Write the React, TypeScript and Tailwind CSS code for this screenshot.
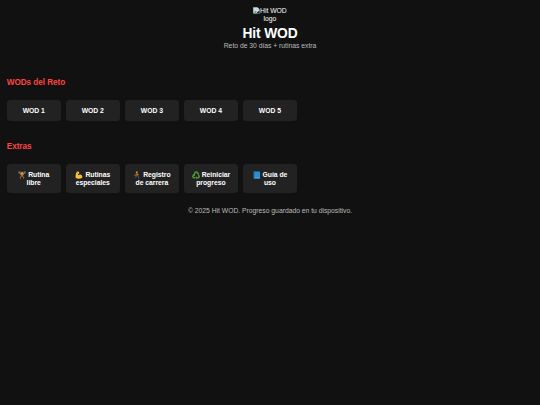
import type { ReactNode } from 'react';

function BrokenImage() {
  return (
    <svg viewBox="0 0 16 16" className="inline-block h-[6.75px] w-[6.75px] align-[-1px]">
      <path d="M1 1h9l5 5v9H1z" fill="#c9dcf2" stroke="#e5e7eb" />
      <path d="M10 1v5h5" fill="#fff" stroke="#a3a3a3" />
      <path d="M2 14l4-6 3 3-4 3z" fill="#4caf50" />
      <path d="M8 15l7-7v7z" fill="#111" />
    </svg>
  );
}

function Emoji({ children }: { children: ReactNode }) {
  return (
    <svg viewBox="0 0 32 32" className="mr-[2px] inline-block h-[8px] w-[8px] align-[-1.6px]">
      {children}
    </svg>
  );
}

const Lifter = () => (
  <Emoji>
    <path d="M3 5h26" stroke="#a7a7a7" strokeWidth="2" />
    <path d="M4 1v9M28 1v9" stroke="#80776a" strokeWidth="4" />
    <circle cx="16" cy="9" r="4" fill="#f5b83d" />
    <path d="M7 6l3 8h12l3-8" fill="none" stroke="#c9922f" strokeWidth="4" />
    <path d="M11 13h10l-1 9h-8z" fill="#b0702f" />
    <path d="M13 21l-4 4 1 5M19 21l4 4-1 5" fill="none" stroke="#b98530" strokeWidth="4" />
  </Emoji>
);

const Biceps = () => (
  <Emoji>
    <path
      d="M8 2l8 1 1 7-5 3 1 5c4-5 10-5 14-1 4 5 3 11-2 12-7 3-16 2-22-1C1 20 3 9 8 2z"
      fill="#fbc52e"
    />
    <path d="M9 9l6 1M13 18l-3 3M19 22c3-2 5-1 7 1" fill="none" stroke="#d68b16" strokeWidth="2" />
  </Emoji>
);

const Runner = () => (
  <Emoji>
    <circle cx="15" cy="5" r="4" fill="#d0922a" />
    <path d="M15 10l2 9" stroke="#c97a27" strokeWidth="6" />
    <path d="M14 12l-6 4-1 4M18 12l6 4" fill="none" stroke="#c08a2c" strokeWidth="3" />
    <path d="M16 19l-5 5-4 3M18 19l4 4v6" fill="none" stroke="#4d5b66" strokeWidth="4" />
  </Emoji>
);

const Recycle = () => (
  <Emoji>
    <g fill="none" stroke="#4d9130" strokeWidth="6">
      <path d="M9 12l5-8h5l4 6" />
      <path d="M25 14l4 8-3 5h-8" />
      <path d="M13 27H6l-3-5 4-7" />
    </g>
    <path d="M18 11l9-5v8zM19 21v11l-6-5zM2 14l9-2 1 9z" fill="#5fa53a" />
  </Emoji>
);

const Book = () => (
  <Emoji>
    <path d="M3 2h25v28H3z" fill="#2a8fd4" />
    <path d="M3 2h4v28H3z" fill="#1f78bd" />
    <path d="M6 27h22v2H6z" fill="#9ccaea" />
  </Emoji>
);

const wods = ['WOD 1', 'WOD 2', 'WOD 3', 'WOD 4', 'WOD 5'];

const extras = [
  { icon: <Lifter />, first: 'Rutina', second: 'libre' },
  { icon: <Biceps />, first: 'Rutinas', second: 'especiales' },
  { icon: <Runner />, first: 'Registro', second: 'de carrera' },
  { icon: <Recycle />, first: 'Reiniciar', second: 'progreso' },
  { icon: <Book />, first: 'Guía de', second: 'uso' },
];

function Card({ children }: { children: ReactNode }) {
  return (
    <button className="w-[54px] rounded-[3.4px] bg-[#222] py-[6.75px] text-center text-[6.8px] leading-[7.7px] font-bold tracking-[-0.02px] whitespace-nowrap text-white">
      {children}
    </button>
  );
}

export default function App() {
  return (
    <div className="h-[405px] overflow-hidden bg-[#111] font-['Liberation_Sans',Arial,sans-serif] text-white">
      <header className="flex flex-col items-center pt-[6.75px] text-center">
        <div className="h-[17px] text-[6.8px] leading-[8px] tracking-[-0.02px] whitespace-nowrap">
          <BrokenImage />
          Hit WOD
          <br />
          logo
        </div>
        <h1 className="mt-[2.3px] text-[13.8px] leading-[16px] font-bold tracking-[-0.15px]">Hit WOD</h1>
        <p className="mt-[0.2px] text-[6.8px] leading-[8px] tracking-[-0.02px] text-[#bbb]">
          Reto de 30 días + rutinas extra
        </p>
      </header>
      <main className="px-[6.75px] pt-[27.3px]">
        <h2 className="text-[8.2px] leading-[10px] font-bold tracking-[-0.05px] text-[#ff4444]">WODs del Reto</h2>
        <div className="mt-[12.4px] flex gap-[5.06px]">
          {wods.map((w) => (
            <Card key={w}>{w}</Card>
          ))}
        </div>
        <h2 className="mt-[20.8px] text-[8.2px] leading-[10px] font-bold tracking-[-0.05px] text-[#ff4444]">Extras</h2>
        <div className="mt-[12.2px] flex gap-[5.06px]">
          {extras.map((e) => (
            <Card key={e.first}>
              <span className="block h-[7.7px]">
                {e.icon}
                {e.first}
              </span>
              <span className="block h-[7.7px]">{e.second}</span>
            </Card>
          ))}
        </div>
      </main>
      <footer className="mt-[13.6px] text-center text-[6.8px] leading-[8px] tracking-[-0.02px] text-[#bbb]">
        © 2025 Hit WOD. Progreso guardado en tu dispositivo.
      </footer>
    </div>
  );
}
